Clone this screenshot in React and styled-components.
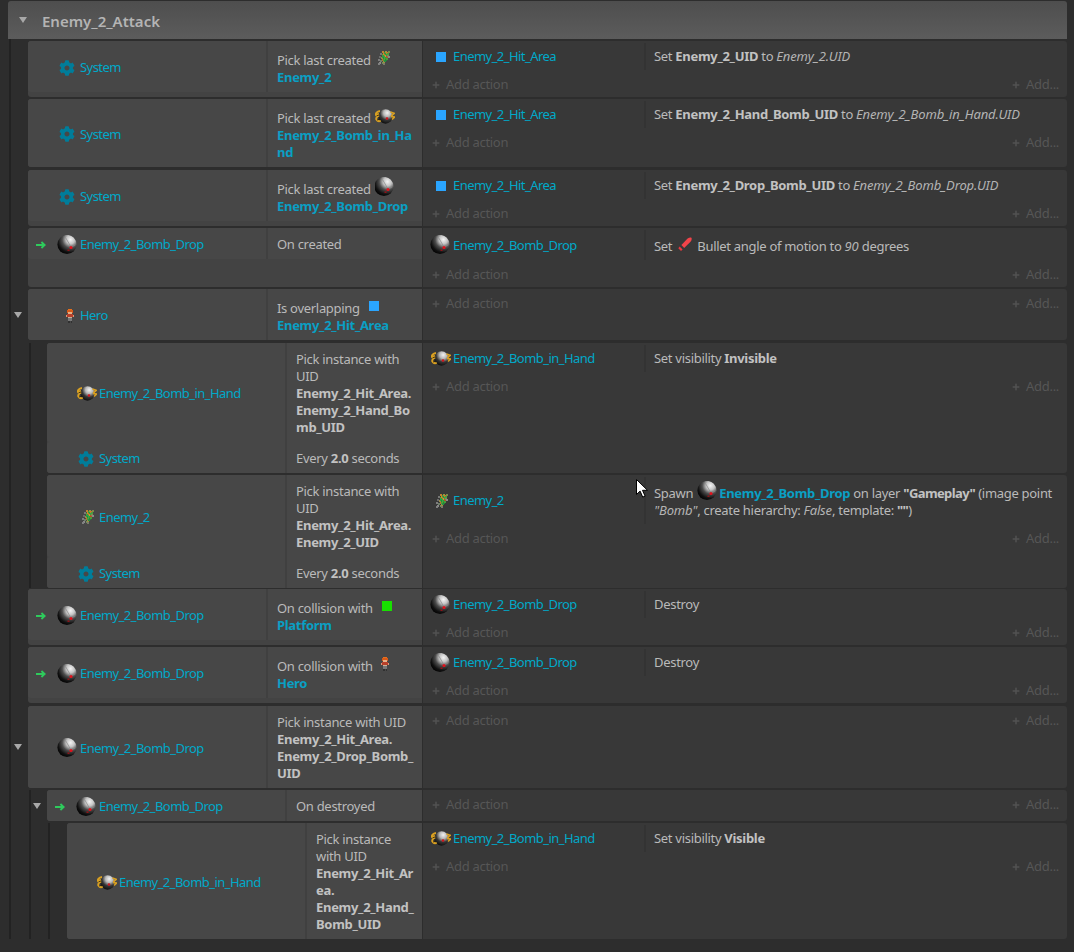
import React from "react";
import styled, { createGlobalStyle } from "styled-components";
import { FaCog, FaPlus } from "react-icons/fa";

const Global = createGlobalStyle`
  html, body { margin: 0; padding: 0; background: #2d2d2d; }
  body { font-family: "Noto Sans", "Open Sans", sans-serif; font-size: 13px; letter-spacing: -0.3px; line-height: 17px; color: #bababa; }
`;

const Sheet = styled.div`
  position: relative;
  width: 1074px;
  height: 952px;
  overflow: hidden;
  box-sizing: border-box;
  padding: 1px 7px 0 8px;
  background: #2d2d2d;
`;

const GroupHeader = styled.div`
  display: flex;
  align-items: center;
  gap: 15px;
  height: 38px;
  padding: 2px 0 0 11px;
  box-sizing: border-box;
  background: linear-gradient(#4e4e4e, #5c5c5c);
  border-radius: 3px 3px 0 0;
  color: #b4b4b4;
  font-size: 15px;
  font-weight: 600;
  letter-spacing: 0;
  > span { margin-top: -2px; }
`;

const Triangle = styled.span`
  flex: none;
  width: 0;
  height: 0;
  border-left: ${(p) => p.$size}px solid transparent;
  border-right: ${(p) => p.$size}px solid transparent;
  border-top: ${(p) => p.$size + 2}px solid #a8a8a8;
`;

const Tree = styled.div`
  margin-left: ${(p) => p.$inset}px;
  padding-left: ${(p) => p.$pad}px;
  padding-top: ${(p) => p.$top || 0}px;
  border-left: 2px solid #222;
`;

const Row = styled.div`
  display: flex;
  margin-bottom: ${(p) => p.$gap ?? 2}px;
`;

const Expander = styled.div`
  flex: none;
  width: 14px;
  margin-left: -14px;
  display: flex;
  align-items: center;
`;

const Conditions = styled.div`
  flex: 1;
  min-width: 0;
  display: flex;
  flex-direction: column;
  background: #434343;
  border-radius: 3px 0 0 3px;
  margin-right: 1px;
`;

const Condition = styled.div`
  display: flex;
  background: #474747;
  border-radius: 3px 0 0 3px;
`;

const ObjectCell = styled.div`
  flex: none;
  width: 239px;
  display: flex;
  align-items: center;
  box-sizing: border-box;
  padding: 2px 0 0 8px;
  color: #00a9c9;
  letter-spacing: -0.55px;
`;

const Trigger = styled.span`
  flex: none;
  width: 12px;
  display: flex;
  align-items: center;
  height: 10px;
`;

const IconSlot = styled.span`
  flex: none;
  width: 30px;
  height: 17px;
  margin-right: 2px;
  display: flex;
  align-items: center;
  justify-content: flex-end;
`;

const CondText = styled.div`
  flex: 1;
  min-width: 0;
  white-space: nowrap;
  padding: 8px 0 6px 9px;
  border-left: 2px solid #404040;
  margin-left: -1px;
`;

const Actions = styled.div`
  flex: 0 0 644px;
  display: flex;
  flex-direction: column;
  background: #383838;
  border-radius: 0 3px 3px 0;
`;

const ActionRow = styled.div`
  display: flex;
  padding-top: 2px;
`;

const ActionObject = styled.div`
  flex: none;
  width: 221px;
  display: flex;
  align-items: center;
  padding-top: 3px;
  padding-bottom: 3px;
  color: #00a9c9;
  letter-spacing: -0.55px;
`;

const ActionSlot = styled.span`
  flex: none;
  width: 28px;
  height: 17px;
  margin-right: 2px;
  display: flex;
  align-items: center;
  justify-content: flex-end;
`;

const ActionText = styled.div`
  flex: 1;
  white-space: nowrap;
  padding: 5px 0 5px 8px;
  border-left: 2px solid #333;
`;

const AddRow = styled.div`
  height: 27px;
  box-sizing: border-box;
  display: flex;
  align-items: center;
  justify-content: space-between;
  padding: 2px 8px 0 9px;
  color: #565656;
`;

const AddLink = styled.span`
  display: flex;
  align-items: center;
  gap: 6px;
  svg { width: 8px; height: 8px; color: #525252; }
`;

const Strong = styled.b`
  font-weight: 700;
  color: #c2c2c2;
`;

const Literal = styled(Strong)`
  letter-spacing: -0.6px;
`;

const Obj = styled.b`
  font-weight: 700;
  color: #0a9fc4;
`;

const Param = styled.i`
  font-style: italic;
  color: #b4b4b4;
  letter-spacing: -0.13px;
`;

const InlineIcon = styled.span`
  display: inline-block;
  overflow: hidden;
  position: relative;
  top: -1px;
  width: 20px;
  height: 20px;
  margin: 0 ${(p) => p.$right ?? 0}px 0 ${(p) => p.$left ?? 4}px;
  vertical-align: -4px;
`;

const InlineBox = styled.span`
  display: flex;
  align-items: center;
  justify-content: center;
  height: 100%;
`;

const Swatch = styled.span`
  display: block;
  width: 10px;
  height: 10px;
  margin-right: ${(p) => p.$mr || 0}px;
  background: ${(p) => p.$color};
`;

const Gear = styled(FaCog)`
  width: 16px;
  height: 16px;
  color: #007d9a;
  margin-right: 3px;
`;

const Sprite = styled.svg`
  flex: none;
  display: block;
  margin-right: ${(p) => p.$mr || 0}px;
`;

const Cursor = styled.svg`
  position: absolute;
  left: 636px;
  top: 479px;
`;

const Ball = () => (
  <Sprite width="20" height="20" viewBox="0 0 20 20" $mr={1}>
    <defs>
      <radialGradient id="ballG" cx="0.68" cy="0.25" r="0.78">
        <stop offset="0" stopColor="#f4f4f4" />
        <stop offset="0.28" stopColor="#c4c4c4" />
        <stop offset="0.55" stopColor="#4c4c4c" />
        <stop offset="0.85" stopColor="#101010" />
        <stop offset="1" stopColor="#050505" />
      </radialGradient>
    </defs>
    <circle cx="10" cy="9.5" r="9.6" fill="url(#ballG)" />
    <path d="M8.5 2.5l5.5 9.5M14 12l4-2" stroke="#8a8a8a" strokeWidth="0.7" fill="none" />
    <circle cx="14" cy="12.5" r="1.6" fill="#e0121c" />
    <rect x="10.5" y="14.5" width="2" height="1.4" fill="#9c1016" />
  </Sprite>
);

const BombHand = () => (
  <Sprite width="20" height="15" viewBox="0 0 20 15">
    <defs>
      <radialGradient id="bombG" cx="0.62" cy="0.25" r="0.8">
        <stop offset="0" stopColor="#f2f2f2" />
        <stop offset="0.32" stopColor="#b8b8b8" />
        <stop offset="0.62" stopColor="#363636" />
        <stop offset="1" stopColor="#080808" />
      </radialGradient>
    </defs>
    <circle cx="10.5" cy="7.5" r="7.2" fill="url(#bombG)" />
    <circle cx="12" cy="9.5" r="1.3" fill="#d0141c" />
    <path d="M5 2C1.8 2.4.4 4.4 1 6l3-1.2M4.2 6.6C1.8 7.2.8 9.2 1.4 10.6c1 1.6 3 2 4.4 1.2" stroke="#d9a021" strokeWidth="1.9" fill="none" />
    <path d="M1.6 6.8L4 6M2 11l2.4-.8" stroke="#2a2008" strokeWidth="0.8" fill="none" />
    <path d="M15.5 3l3.8 1.4-3 2.4M16 7.5l3.6.6-2.6 2.4" stroke="#d9a021" strokeWidth="1.6" fill="none" />
  </Sprite>
);

const enemyPixels = [
  [2, 9, "#7d7d7d"], [3, 6, "#6b6b6b"], [3, 12, "#8a8a8a"], [4, 3, "#777"], [4, 10, "#6f7f6a"], [2, 13, "#808080"],
  [5, 7, "#9a8a4a"], [6, 1, "#c08030"], [6, 4, "#4e9a3a"], [6, 6, "#2ea03a"], [6, 9, "#c06a28"], [6, 12, "#6f8f5a"],
  [7, 3, "#d08a2a"], [7, 5, "#28a048"], [7, 7, "#1f8f3a"], [7, 9, "#3aa040"], [7, 11, "#a09040"], [7, 13, "#7a7a6a"],
  [8, 2, "#3e9a3a"], [8, 4, "#c8702a"], [8, 6, "#2cae4a"], [8, 8, "#5aa030"], [8, 10, "#2a9040"],
  [9, 1, "#909a40"], [9, 3, "#2a9a40"], [9, 5, "#d89030"], [9, 7, "#28a040"], [9, 9, "#1f8a3a"],
  [10, 2, "#c87a28"], [10, 4, "#2ea848"], [10, 6, "#b84a28"], [10, 8, "#4a9a3a"], [11, 3, "#48a040"], [11, 5, "#808a50"], [12, 1, "#7a8a4a"], [12, 6, "#8a8a8a"],
];

const Enemy = () => (
  <Sprite width="14" height="16" viewBox="0 0 14 16" shapeRendering="crispEdges" $mr={3}>
    {enemyPixels.map(([x, y, c], i) => (
      <rect key={i} x={x} y={y} width="2" height="2" fill={c} />
    ))}
  </Sprite>
);

const Hero = () => (
  <Sprite width="8" height="14" viewBox="0 0 8 14" shapeRendering="crispEdges" $mr={4}>
    <rect x="2" y="0" width="4" height="2" fill="#e8701c" />
    <rect x="1" y="1" width="6" height="3" fill="#d85a18" />
    <rect x="2" y="3" width="4" height="2" fill="#e8b088" />
    <rect x="1" y="5" width="6" height="3" fill="#b8402a" />
    <rect x="0" y="6" width="1" height="2" fill="#d89878" />
    <rect x="7" y="6" width="1" height="2" fill="#d89878" />
    <rect x="2" y="8" width="4" height="1" fill="#c8b098" />
    <rect x="2" y="9" width="4" height="3" fill="#787878" />
    <rect x="2" y="12" width="1.5" height="2" fill="#303030" />
    <rect x="4.5" y="12" width="1.5" height="2" fill="#303030" />
  </Sprite>
);

const Bullet = () => (
  <Sprite width="14" height="14" viewBox="0 0 14 14">
    <path d="M3.4 8L9.6 1.6C11 .4 12.8.2 13.4.8c.6.8.3 2.6-.9 4L6.2 11z" fill="#f2444a" />
    <path d="M1.6 9.6l3 3L3 14 .3 11.2z" fill="#e8383e" />
  </Sprite>
);

const Arrow = () => (
  <Sprite width="10" height="8" viewBox="0 0 10 8">
    <path d="M0 4h8M5.4 1l3.2 3-3.2 3" stroke="#2ecb5c" strokeWidth="1.9" fill="none" />
  </Sprite>
);

const sprites = {
  ball: <Ball />,
  bomb: <BombHand />,
  enemy: <Enemy />,
  hero: <Hero />,
  gear: <Gear />,
  hit: <Swatch $color="#2aa5ff" $mr={5} />,
  platform: <Swatch $color="#18e000" />,
  bullet: <Bullet />,
};

const inlineSprites = { ...sprites, hit: <Swatch $color="#2aa5ff" /> };

const names = {
  ball: "Enemy_2_Bomb_Drop",
  bomb: "Enemy_2_Bomb_in_Hand",
  enemy: "Enemy_2",
  hero: "Hero",
  gear: "System",
  hit: "Enemy_2_Hit_Area",
};

const Inline = ({ of, left, right }) => (
  <InlineIcon $left={left} $right={right}><InlineBox>{inlineSprites[of]}</InlineBox></InlineIcon>
);

const Cond = ({ of, trigger, children }) => (
  <Condition>
    <ObjectCell>
      <Trigger>{trigger && <Arrow />}</Trigger>
      <IconSlot>{sprites[of]}</IconSlot>
      {names[of]}
    </ObjectCell>
    <CondText>{children}</CondText>
  </Condition>
);

const Act = ({ of, children }) => (
  <ActionRow>
    <ActionObject>
      <ActionSlot>{sprites[of]}</ActionSlot>
      {names[of]}
    </ActionObject>
    <ActionText>{children}</ActionText>
  </ActionRow>
);

const Add = () => (
  <AddRow>
    <AddLink><FaPlus />Add action</AddLink>
    <AddLink><FaPlus />Add...</AddLink>
  </AddRow>
);

const Event = ({ gap, expand, conds, acts }) => (
  <Row $gap={gap}>
    {expand && <Expander><Triangle $size={4.5} /></Expander>}
    <Conditions>{conds}</Conditions>
    <Actions>{acts}<Add /></Actions>
  </Row>
);

export default function App() {
  return (
    <Sheet>
      <Global />
      <GroupHeader><Triangle $size={4.5} />Enemy_2_Attack</GroupHeader>
      <Tree $inset={1} $pad={17} $top={2}>
        <Event
          conds={<Cond of="gear">Pick last created<Inline of="enemy" /><br /><Obj>Enemy_2</Obj></Cond>}
          acts={<Act of="hit">Set <Strong>Enemy_2_UID</Strong> to <Param>Enemy_2.UID</Param></Act>}
        />
        <Event
          gap={3}
          conds={<Cond of="gear">Pick last created<Inline of="bomb" /><br /><Obj>Enemy_2_Bomb_in_Ha<br />nd</Obj></Cond>}
          acts={<Act of="hit">Set <Strong>Enemy_2_Hand_Bomb_UID</Strong> to <Param>Enemy_2_Bomb_in_Hand.UID</Param></Act>}
        />
        <Event
          conds={<Cond of="gear">Pick last created<Inline of="ball" /><br /><Obj>Enemy_2_Bomb_Drop</Obj></Cond>}
          acts={<Act of="hit">Set <Strong>Enemy_2_Drop_Bomb_UID</Strong> to <Param>Enemy_2_Bomb_Drop.UID</Param></Act>}
        />
        <Event
          conds={<Cond of="ball" trigger>On created</Cond>}
          acts={<Act of="ball">Set<Inline of="bullet" left={3} right={-1} /> Bullet angle of motion to <Param>90</Param> degrees</Act>}
        />
        <Event
          gap={3}
          expand
          conds={<Cond of="hero">Is overlapping<Inline of="hit" /><br /><Obj>Enemy_2_Hit_Area</Obj></Cond>}
        />
        <Tree $inset={1} $pad={16}>
          <Event
            conds={<>
              <Cond of="bomb">Pick instance with<br />UID<br /><Strong>Enemy_2_Hit_Area.</Strong><br /><Strong>Enemy_2_Hand_Bo</Strong><br /><Strong>mb_UID</Strong></Cond>
              <Cond of="gear">Every <Strong>2.0</Strong> seconds</Cond>
            </>}
            acts={<Act of="bomb">Set visibility <Strong>Invisible</Strong></Act>}
          />
          <Event
            gap={1}
            conds={<>
              <Cond of="enemy">Pick instance with<br />UID<br /><Strong>Enemy_2_Hit_Area.</Strong><br /><Strong>Enemy_2_UID</Strong></Cond>
              <Cond of="gear">Every <Strong>2.0</Strong> seconds</Cond>
            </>}
            acts={<Act of="enemy">Spawn<Inline of="ball" right={2} /><Obj>Enemy_2_Bomb_Drop</Obj> on layer <Literal>"Gameplay"</Literal> (image point<br /><Param>"Bomb"</Param>, create hierarchy: <Param>False</Param>, template: <Literal>""</Literal>)</Act>}
          />
        </Tree>
        <Event
          conds={<Cond of="ball" trigger>On collision with<Inline of="platform" /><br /><Obj>Platform</Obj></Cond>}
          acts={<Act of="ball">Destroy</Act>}
        />
        <Event
          gap={3}
          conds={<Cond of="ball" trigger>On collision with<Inline of="hero" /><br /><Obj>Hero</Obj></Cond>}
          acts={<Act of="ball">Destroy</Act>}
        />
        <Event
          expand
          conds={<Cond of="ball">Pick instance with UID<br /><Strong>Enemy_2_Hit_Area.</Strong><br /><Strong>Enemy_2_Drop_Bomb_</Strong><br /><Strong>UID</Strong></Cond>}
        />
        <Tree $inset={1} $pad={16}>
          <Event
            expand
            conds={<Cond of="ball" trigger>On destroyed</Cond>}
          />
          <Tree $inset={1} $pad={17}>
            <Event
              gap={1}
              conds={<Cond of="bomb">Pick instance<br />with UID<br /><Strong>Enemy_2_Hit_Ar</Strong><br /><Strong>ea.</Strong><br /><Strong>Enemy_2_Hand_</Strong><br /><Strong>Bomb_UID</Strong></Cond>}
              acts={<Act of="bomb">Set visibility <Strong>Visible</Strong></Act>}
            />
          </Tree>
        </Tree>
      </Tree>
      <Cursor width="12" height="19" viewBox="0 0 12 19">
        <path d="M.5.5v15l3.6-3.4 2.6 6 2.4-1-2.6-5.8h5z" fill="#fff" stroke="#000" strokeWidth="1" />
      </Cursor>
    </Sheet>
  );
}
